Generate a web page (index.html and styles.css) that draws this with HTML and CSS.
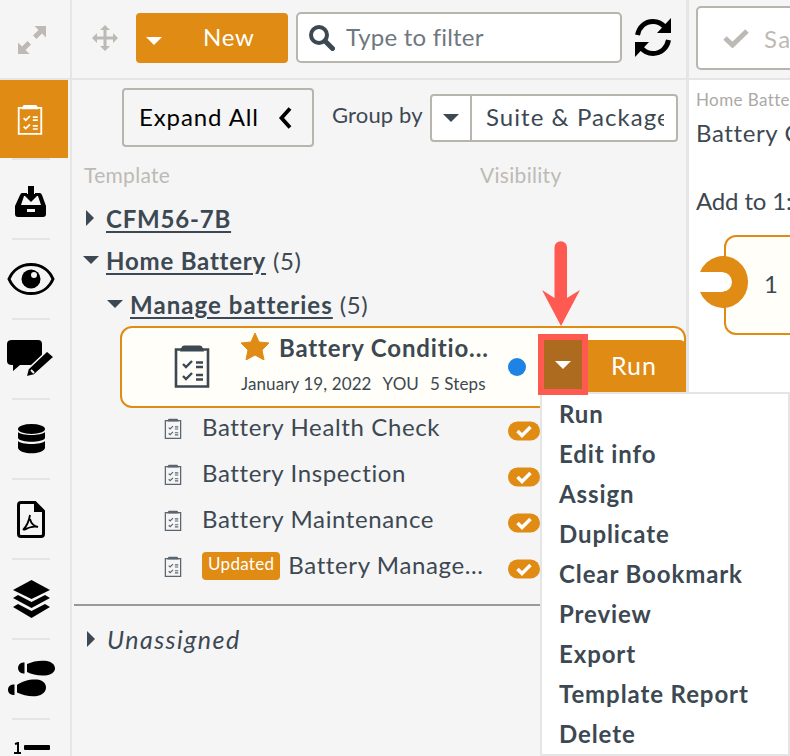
FILE: index.html
```html
<!DOCTYPE html>
<html lang="en">
<head>
<meta charset="utf-8">
<title>Templates</title>
<link rel="stylesheet" href="styles.css">
</head>
<body>
<svg class="defs" width="0" height="0" aria-hidden="true">
  <symbol id="clip" viewBox="0 0 36 44">
    <path d="M2 5.500h32v37H2z" fill="none" stroke="currentColor" stroke-width="2.600"/>
    <path d="M10 1.500h16q2 0 3 3l1 3H6l1-3q1-3 3-3z" fill="currentColor"/>
    <path d="M9 20l3 3 6-6M9 32l3 3 6-6" fill="none" stroke="currentColor" stroke-width="2.400"/>
    <path d="M22 18.500h7M22 23h7M22 31h7M22 35.500h7" fill="none" stroke="currentColor" stroke-width="2.400"/>
  </symbol>
  <symbol id="tick" viewBox="0 0 32 20">
    <rect width="32" height="19" y=".5" rx="9.500" fill="#df8b14"/>
    <path d="M9.500 10l4.500 4.500 8.500-8.500" fill="none" stroke="#fff" stroke-width="3.500"/>
  </symbol>
</svg>
<div class="app">
  <nav class="sidebar">
    <div class="side-top">
      <svg width="28" height="28" viewBox="0 0 28 28"><path d="M28 0v11.500l-4-4-5.500 5.500-3.500-3.500L20.500 4l-4-4zM0 28V16.500l4 4L9.500 15l3.500 3.500L7.500 24l4 4z" fill="#bdbab5"/></svg>
    </div>
    <div class="side-item active">
      <svg class="clip-w" width="26" height="31"><use href="#clip"/></svg>
    </div>
    <div class="side-item low">
      <svg width="32" height="31" viewBox="0 0 32 31"><path d="M7 7h5v3H9L6 19h20l-3-9h-3V7h5q1 0 2 2l4 11v8q0 3-3 3H3q-3 0-3-3v-8L5 9q1-2 2-2z"/><path d="M13 0h6v8h5l-8 8-8-8h5z"/><path d="M12 23h8v3h-8z" fill="#f5f5f5"/></svg>
    </div>
    <div class="side-item">
      <svg width="48" height="32" viewBox="0 0 48 32"><path d="M24 1.500C36 1.500 43 9 46 16c-3 7-10 14.500-22 14.500S5 23 2 16C5 9 12 1.500 24 1.500z" fill="none" stroke="#000" stroke-width="3"/><circle cx="24" cy="16" r="9.500"/><circle cx="27" cy="12" r="3" fill="#f5f5f5"/></svg>
    </div>
    <div class="side-item">
      <svg width="48" height="38" viewBox="0 0 48 38"><path d="M5 0h26q4 0 4 4v17q0 4-4 4H13l-7 6v-6H5q-5 0-5-4V4q0-4 5-4z"/><path d="M40 11l7 6-20 18-8 2 2-8z" stroke="#f5f5f5" stroke-width="1.500"/><path d="M24 30l3 3" stroke="#f5f5f5" stroke-width="2"/></svg>
    </div>
    <div class="side-item">
      <svg width="27" height="30" viewBox="0 0 27 30"><ellipse cx="13.500" cy="5" rx="13.500" ry="5"/><path d="M0 8c3 4 24 4 27 0v6c-2 5-25 5-27 0zM0 17c3 4 24 4 27 0v7c-2 7-25 7-27 0z"/></svg>
    </div>
    <div class="side-item">
      <svg width="28" height="37" viewBox="0 0 28 37"><path d="M4 1.500h14L26.500 10v23q0 2.500-2.500 2.500H4Q1.500 35.500 1.500 33V4Q1.500 1.500 4 1.500z" fill="none" stroke="#000" stroke-width="3"/><path d="M17 1.500V11h9.500z"/><path d="M13 14c-1 6-4 12-7 15M13 18c1 4 3 7 8 8-4-1-9 0-14 3" fill="none" stroke="#000" stroke-width="1.800"/></svg>
    </div>
    <div class="side-item">
      <svg width="37" height="38" viewBox="0 0 37 38"><path d="M18.500 0L37 10 18.500 19 0 10z"/><path d="M5 15l13.500 7L32 15l5 3-18.500 10L0 18z"/><path d="M5 24l13.500 7L32 24l5 3-18.500 11L0 27z"/></svg>
    </div>
    <div class="side-item">
      <svg width="47" height="38" viewBox="0 0 47 38"><path d="M19 4c6-3 14-4 20-3 5 1 8 4 8 7.500S43 15 37 15.500c-7 .5-13-1-18-3.500z"/><path d="M16.500 2.500v11H15a5.500 5.500 0 0 1-5-5.500 5.500 5.500 0 0 1 5-5.500z"/><path d="M9 25c5-4 13-6 20-5.500 5 .5 9 3.500 9 8s-4 7.500-9 8.500c-7 1-14-1-20-3.500z"/><path d="M6.500 24.500V35H5a5 5 0 0 1-5-5 5 5 0 0 1 5-5.500z"/></svg>
    </div>
    <div class="side-item up">
      <svg width="37" height="30" viewBox="0 0 37 30"><path d="M2 2l3-1v9M1 11h7M1 17c3-3 7-1 5 2l-5 5h7" fill="none" stroke="#000" stroke-width="2"/><rect x="11" y="3" width="26" height="5" rx="1"/><rect x="11" y="17" width="26" height="5" rx="1"/></svg>
    </div>
  </nav>

  <main class="center">
    <header class="toolbar">
      <svg class="move" width="26" height="26" viewBox="0 0 26 26"><path d="M13 0l5 5h-3.500v6.500H21V8l5 5-5 5v-3.500h-6.500V21H18l-5 5-5-5h3.500v-6.500H5V18l-5-5 5-5v3.500h6.500V5H8z" fill="#bdbab5"/></svg>
      <button class="btn-new"><span class="caret white"></span><span class="new-label">New</span></button>
      <div class="filter">
        <svg width="27" height="27" viewBox="0 0 27 27"><circle cx="11" cy="11" r="8" fill="none" stroke="#3c4852" stroke-width="4"/><path d="M17 17l7.500 7.500" stroke="#3c4852" stroke-width="5" stroke-linecap="round"/></svg>
        <span class="filter-text">Type to filter</span>
      </div>
      <svg class="refresh" width="38" height="39" viewBox="0 0 38 39"><path d="M3.500 17C5 9 11 3.500 19 3.500c5 0 9 2 12 6" fill="none" stroke="#000" stroke-width="5"/><path d="M37 0v15H23z"/><path d="M34.500 22C33 30 27 35.500 19 35.500c-5 0-9-2-12-6" fill="none" stroke="#000" stroke-width="5"/><path d="M1 39V24h14z"/></svg>
    </header>

    <section class="controls">
      <button class="btn-expand"><span class="expand-label">Expand All</span>
        <svg width="15" height="24" viewBox="0 0 15 24"><path d="M12 2.500L3.500 12l8.500 9.500" fill="none" stroke="#000" stroke-width="3.800"/></svg>
      </button>
      <span class="group-label">Group by</span>
      <div class="select">
        <span class="select-caret"><span class="caret dark"></span></span>
        <span class="select-value">Suite &amp; Package</span>
      </div>
    </section>

    <div class="col-heads"><span>Template</span><span>Visibility</span></div>

    <div class="tree">
      <div class="node lvl1"><span class="tri right"></span><a class="node-name">CFM56-7B</a></div>
      <div class="node lvl1"><span class="caret dark"></span><a class="node-name">Home Battery</a><span class="count">(5)</span></div>
      <div class="node lvl2"><span class="caret dark"></span><a class="node-name">Manage batteries</a><span class="count">(5)</span></div>

      <article class="card">
        <svg class="card-icon" width="36" height="44"><use href="#clip"/></svg>
        <div class="card-main">
          <div class="card-title">
            <svg width="28" height="27" viewBox="0 0 28 27"><path d="M14 0l4 9 10 1-7 7 2 10-9-5-9 5 2-10-7-7 10-1z" fill="#df8b14" stroke="#df8b14" stroke-linejoin="round"/></svg>
            <span>Battery Conditio...</span>
          </div>
          <div class="card-meta"><span>January 19, 2022</span><span>YOU</span><span>5 Steps</span></div>
        </div>
        <span class="dot"></span>
        <button class="btn-drop"><span class="caret white"></span></button>
        <button class="btn-run">Run</button>
      </article>

      <div class="rows">
        <div class="row"><svg class="row-icon" width="18" height="21"><use href="#clip"/></svg><span class="row-name">Battery Health Check</span><svg class="tick" width="32" height="20"><use href="#tick"/></svg></div>
        <div class="row"><svg class="row-icon" width="18" height="21"><use href="#clip"/></svg><span class="row-name">Battery Inspection</span><svg class="tick" width="32" height="20"><use href="#tick"/></svg></div>
        <div class="row"><svg class="row-icon" width="18" height="21"><use href="#clip"/></svg><span class="row-name">Battery Maintenance</span><svg class="tick" width="32" height="20"><use href="#tick"/></svg></div>
        <div class="row"><svg class="row-icon" width="18" height="21"><use href="#clip"/></svg><span class="badge">Updated</span><span class="row-name">Battery Manage...</span><svg class="tick" width="32" height="20"><use href="#tick"/></svg></div>
      </div>
      <div class="tree-rule"></div>
      <div class="node unassigned"><span class="tri right"></span><em>Unassigned</em></div>
    </div>
  </main>

  <aside class="detail">
    <header class="detail-head">
      <button class="btn-save">
        <svg width="26" height="20" viewBox="0 0 26 20"><path d="M2 10l7.500 7L24 3" fill="none" stroke="#bdbab5" stroke-width="5"/></svg>
        <span class="save-label">Save</span>
      </button>
    </header>
    <div class="detail-body">
      <div class="crumb">Home Battery</div>
      <div class="detail-title">Battery Condition</div>
      <div class="add-to">Add to 1:</div>
      <div class="step">
        <svg class="step-notch" width="50" height="52" viewBox="0 0 50 52"><path d="M0 16h22a10 10 0 0 1 0 20H0z" fill="#fff"/><path d="M0 16A25 26 0 1 1 0 36H22a10 10 0 0 0 0-20z" fill="#df8b14"/></svg>
        <span class="step-num">1</span>
      </div>
    </div>
  </aside>

  <ul class="menu">
    <li>Run</li><li>Edit info</li><li>Assign</li><li>Duplicate</li><li>Clear Bookmark</li><li>Preview</li><li>Export</li><li>Template Report</li><li>Delete</li>
  </ul>

  <svg class="arrow" width="38" height="85" viewBox="0 0 38 85"><path d="M12.500 6.500a6.250 6.250 0 0 1 12.500 0V57l13-8-19 36L0 49l12.500 8z" fill="#ff5a52"/></svg>
</div>
</body>
</html>
```
FILE: styles.css
```css
* { box-sizing: border-box; }
html, body { margin: 0; height: 100%; }
body {
  font-family: "Lato", "Open Sans", sans-serif;
  color: #3c4852;
  background: #f5f5f5;
  overflow: hidden;
}
.defs { position: absolute; }
button { font-family: inherit; cursor: pointer; }

.app {
  position: relative;
  display: flex;
  width: 790px;
  height: 756px;
  overflow: hidden;
}

/* Sidebar */
.sidebar {
  flex: 0 0 72px;
  border-right: 2px solid #e5e5e5;
  overflow: hidden;
}
.side-top {
  display: flex;
  align-items: center;
  justify-content: center;
  height: 80px;
  padding: 2px 6px 0 0;
  border-bottom: 2px solid #e5e5e5;
}
.side-item {
  position: relative;
  display: flex;
  align-items: center;
  justify-content: center;
  width: 68px;
  height: 78px;
  margin-bottom: 2px;
  padding-right: 6px;
}
.side-item::after {
  content: "";
  position: absolute;
  left: 12px;
  bottom: -2px;
  width: 38px;
  height: 2px;
  background: #e5e5e5;
}
.side-item.active { background: #df8b14; padding-right: 8px; }
.side-item.low { padding-top: 4px; }
.side-item.up { padding-bottom: 4px; }
.clip-w { color: #fff; }

/* Center */
.center {
  flex: 0 0 617px;
  border-right: 3px solid #e5e5e5;
  min-width: 0;
}
.toolbar {
  display: flex;
  align-items: center;
  height: 80px;
  padding: 0 0 3px 20px;
  border-bottom: 2px solid #e5e5e5;
}
.move { margin-right: 18px; }
.btn-new {
  position: relative;
  display: flex;
  align-items: center;
  width: 152px;
  height: 50px;
  padding: 0 0 0 10px;
  border: 0;
  border-radius: 4px;
  background: #df8b14;
  color: #fff;
  font-size: 24px;
}
.new-label { margin-left: 41px; padding-bottom: 2px; letter-spacing: .8px; }
.caret {
  display: inline-block;
  flex: none;
  width: 0;
  height: 0;
  border-left: 8px solid transparent;
  border-right: 8px solid transparent;
  border-top: 8px solid #3c4852;
}
.caret.white { border-top-color: #fff; }
.btn-new .caret { margin-top: 7px; }
.filter {
  display: flex;
  align-items: center;
  gap: 11px;
  width: 326px;
  height: 51px;
  margin-left: 8px;
  padding-left: 10px;
  border: 2px solid #b8b4ae;
  border-radius: 5px;
  background: #fff;
}
.filter-text { padding-bottom: 2px; font-size: 24px; color: #6f7780; letter-spacing: .2px; }
.refresh { margin-left: 12px; }

.controls {
  display: flex;
  align-items: center;
  height: 59px;
  margin-top: 8px;
  padding-left: 50px;
}
.btn-expand {
  display: flex;
  align-items: center;
  justify-content: space-between;
  width: 192px;
  height: 59px;
  padding: 0 19px 0 15px;
  border: 2px solid #b8b4ae;
  border-radius: 4px;
  background: #f5f5f5;
  color: #000;
  font-size: 24px;
  letter-spacing: .9px;
}
.expand-label { padding-bottom: 3px; }
.group-label { width: 98px; margin-left: 18px; padding-bottom: 6px; font-size: 22px; letter-spacing: .15px; }
.select {
  display: flex;
  width: 248px;
  height: 48px;
  border: 2px solid #b8b4ae;
  border-radius: 4px;
  background: #fff;
  overflow: hidden;
}
.select-caret {
  display: flex;
  align-items: center;
  justify-content: center;
  flex: 0 0 40px;
  border-right: 2px solid #b8b4ae;
}
.select-value {
  padding-left: 14px;
  margin-right: 12px;
  font-size: 24px;
  line-height: 42px;
  letter-spacing: 1.05px;
  white-space: nowrap;
  overflow: hidden;
}

.col-heads {
  display: grid;
  grid-template-columns: 396px auto;
  margin-top: 16px;
  padding-left: 12px;
  font-size: 21px;
  line-height: 24px;
  color: #bdbab5;
  letter-spacing: .3px;
}

.tree { margin-top: 11px; }
.node {
  display: flex;
  align-items: center;
  height: 42px;
  font-size: 24px;
}
.lvl1 { padding-left: 11px; padding-bottom: 2px; letter-spacing: .8px; }
.lvl1 .caret { margin-right: 7px; }
.lvl1 .tri { margin-left: 3px; margin-right: 12px; }
.lvl2 { height: 44px; padding-left: 35px; letter-spacing: 1.05px; }
.lvl2 .caret { margin-right: 7px; }
.node-name {
  font-weight: 700;
  text-decoration: underline;
  text-underline-offset: 3px;
}
.count { margin-left: 7px; letter-spacing: .5px; }
.tri.right {
  display: inline-block;
  flex: none;
  width: 0;
  height: 0;
  border-top: 8px solid transparent;
  border-bottom: 8px solid transparent;
  border-left: 8px solid #3c4852;
}

.card {
  display: flex;
  align-items: flex-start;
  height: 82px;
  margin-left: 48px;
  padding: 0 0 0 52px;
  border: 2px solid #df8b14;
  border-radius: 12px;
  background: #fffef8;
}
.card-icon { flex: none; margin-top: 16px; color: #3c4852; }
.card-main { flex: 0 0 267px; margin-left: 31px; min-width: 0; }
.card-title {
  display: flex;
  align-items: center;
  gap: 10px;
  height: 27px;
  margin-top: 5px;
  font-size: 24px;
  font-weight: 700;
  letter-spacing: .85px;
  white-space: nowrap;
}
.card-title span { padding-top: 2px; }
.card-meta {
  display: flex;
  gap: 11px;
  margin-top: 14px;
  font-size: 17px;
  line-height: 20px;
  letter-spacing: .1px;
  white-space: nowrap;
}
.dot {
  flex: none;
  width: 18px;
  height: 18px;
  margin-top: 30px;
  border-radius: 50%;
  background: #1e83e5;
}
.btn-drop {
  position: relative;
  z-index: 3;
  flex: none;
  display: flex;
  align-items: center;
  justify-content: center;
  width: 38px;
  height: 49px;
  margin: 12px 0 0 18px;
  padding: 0;
  border: 0;
  background: #ac6b1f;
  box-shadow: 0 0 0 6px #ff5a52;
}
.btn-run {
  flex: none;
  width: 98px;
  height: 54px;
  margin: 12px -2px 0 6px;
  padding: 0 6px 4px 0;
  border: 0;
  border-radius: 0 6px 0 0;
  background: #df8b14;
  color: #fff;
  font-size: 25px;
  letter-spacing: 1px;
}

.rows { display: flex; flex-direction: column; gap: 6px; }
.row {
  display: flex;
  align-items: center;
  height: 40px;
  padding-left: 92px;
  font-size: 24px;
  letter-spacing: .62px;
  white-space: nowrap;
}
.row-icon { flex: none; margin-right: 20px; color: #5b6570; }
.row-name { flex: none; padding-bottom: 4px; }
.tick { position: absolute; left: 508px; margin-top: 5px; }
.badge {
  flex: none;
  height: 28px;
  margin-right: 8px;
  padding: 0 6px;
  border-radius: 4px;
  background: #df8b14;
  color: #fff;
  font-size: 17px;
  line-height: 24px;
  letter-spacing: .3px;
}
.tree-rule {
  height: 2px;
  margin: 18px 0 0 2px;
  background: #999;
}
.unassigned {
  height: 70px;
  padding: 0 0 4px 15px;
  font-size: 25px;
  letter-spacing: 1.45px;
}
.unassigned .tri { margin-right: 12px; }
.unassigned em { font-style: italic; }

/* Detail */
.detail {
  flex: 1;
  min-width: 0;
  background: #fff;
  overflow: hidden;
  white-space: nowrap;
}
.detail-head {
  height: 80px;
  padding: 6px 0 0 7px;
  background: #f5f5f5;
  border-bottom: 2px solid #e5e5e5;
}
.btn-save {
  display: flex;
  align-items: center;
  gap: 15px;
  width: 200px;
  height: 64px;
  padding: 0 0 0 25px;
  border: 2px solid #b8b4ae;
  border-radius: 5px;
  background: #fff;
  color: #bdbab5;
  font-size: 24px;
}
.save-label { letter-spacing: 1.5px; }
.detail-body { padding: 10px 0 0 7px; }
.crumb { font-size: 17px; line-height: 20px; color: #aaa9a6; letter-spacing: .4px; }
.detail-title { margin-top: 8px; font-size: 24px; line-height: 30px; letter-spacing: .6px; }
.add-to { margin-top: 38px; font-size: 24px; line-height: 30px; letter-spacing: -.15px; }
.step {
  position: relative;
  display: flex;
  align-items: center;
  width: 200px;
  height: 100px;
  margin: 19px 0 0 28px;
  padding: 0 0 4px 38px;
  border: 2px solid #df8b14;
  border-radius: 12px;
  background: #fffef8;
}
.step-notch { position: absolute; left: -26px; top: 19px; }
.step-num { font-size: 24px; }

/* Overlays */
.menu {
  position: absolute;
  left: 540px;
  top: 392px;
  right: 0;
  bottom: 0;
  z-index: 2;
  margin: 0;
  padding: 0 0 0 17px;
  list-style: none;
  border: 2px solid #e5e5e5;
  background: #fff;
}
.menu li {
  height: 40px;
  font-size: 24px;
  font-weight: 700;
  line-height: 40px;
  letter-spacing: .9px;
}
.arrow { position: absolute; left: 542px; top: 241px; z-index: 4; }
```
